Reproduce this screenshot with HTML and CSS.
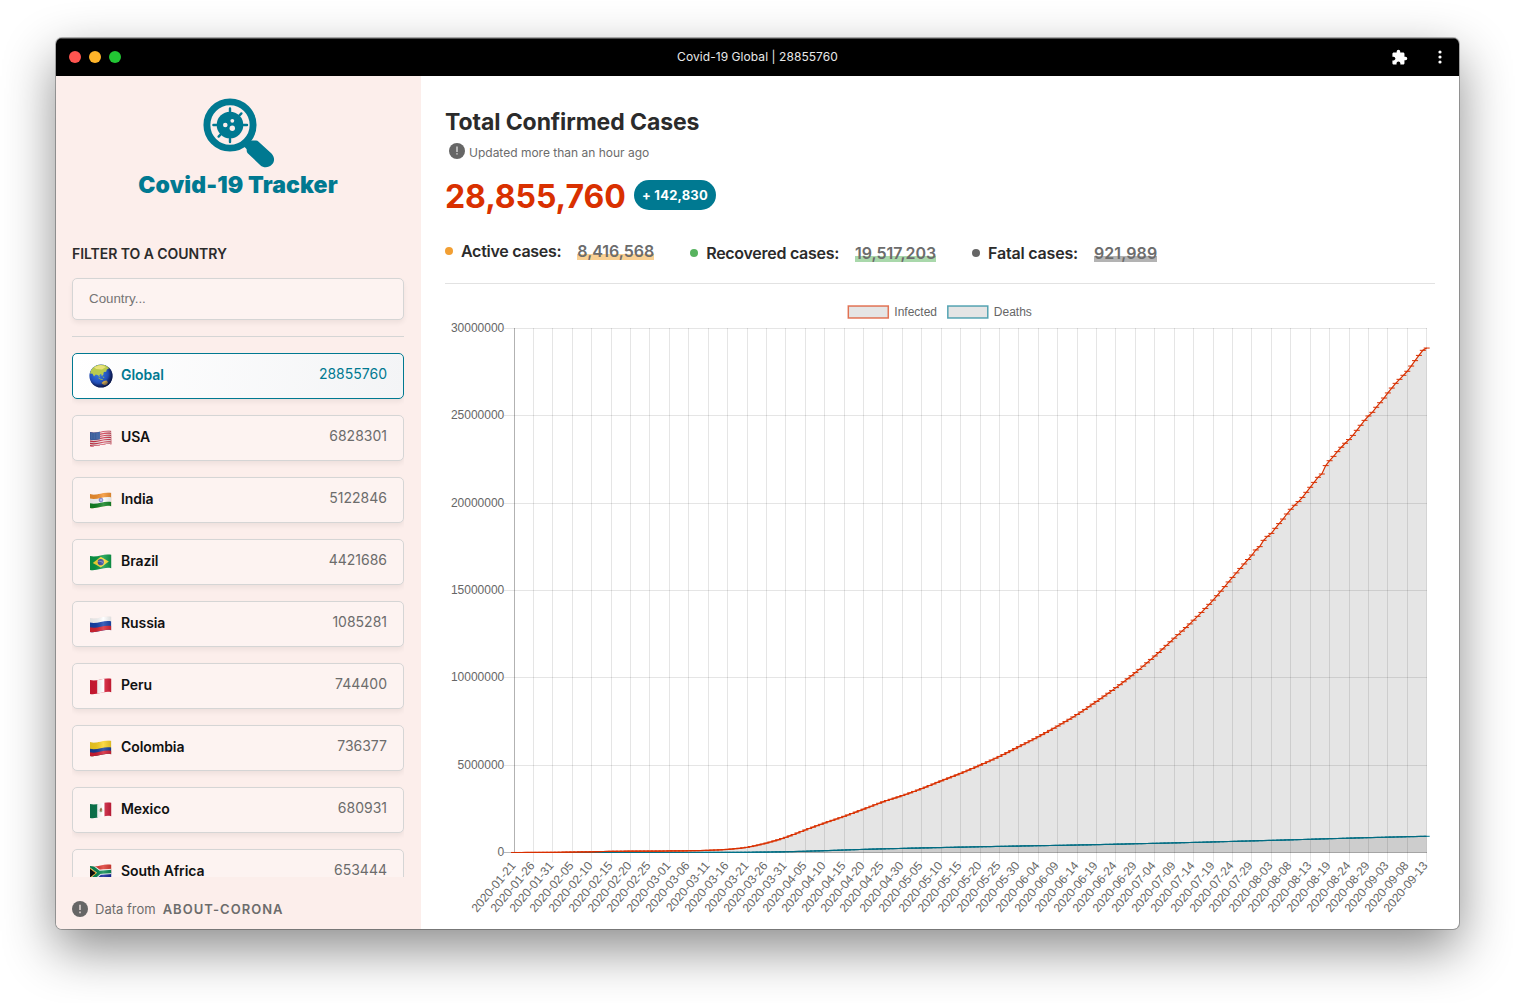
FILE: index.html
```html
<!DOCTYPE html>
<html lang="en">
<head>
<meta charset="utf-8">
<title>Covid-19 Global | 28855760</title>
<link rel="stylesheet" href="styles.css">
</head>
<body>
<svg class="defs" width="0" height="0" aria-hidden="true">
  <defs>
    <clipPath id="wave"><path d="M0 2C7 4 14-1 21.2 .8V14.2C14 12.4 7 17.4 0 16Z"/></clipPath>
    <path id="band" d="M0 2C7 4 14-1 21.5 .8V20H0Z"/>
    <linearGradient id="gloss" x1="0" x2="1" y1="0" y2="0">
      <stop offset="0" stop-color="#000" stop-opacity=".12"/><stop offset=".25" stop-color="#000" stop-opacity=".1"/>
      <stop offset=".6" stop-color="#fff" stop-opacity=".16"/><stop offset="1" stop-color="#000" stop-opacity=".14"/>
    </linearGradient>
    <radialGradient id="ocean" cx=".4" cy=".4" r=".62">
      <stop offset="0" stop-color="#3c7fe6"/><stop offset=".6" stop-color="#2352bd"/><stop offset="1" stop-color="#101f5c"/>
    </radialGradient>
    <radialGradient id="shade" cx=".4" cy=".4" r=".62">
      <stop offset=".7" stop-color="#0a1440" stop-opacity="0"/><stop offset="1" stop-color="#0a1440" stop-opacity=".7"/>
    </radialGradient>
    <clipPath id="disc"><circle cx="12" cy="12" r="11.6"/></clipPath>
  </defs>
</svg>

<div class="window">
  <header class="titlebar">
    <div class="lights"><i class="light red"></i><i class="light amber"></i><i class="light green"></i></div>
    <div class="window-title">Covid-19 Global | 28855760</div>
    <div class="tools">
      <svg width="17" height="17" viewBox="0 0 24 24" fill="#fff"><path d="M20.5 11H19V7c0-1.1-.9-2-2-2h-4V3.500a2.500 2.500 0 0 0-5 0V5H4c-1.100 0-1.990.9-1.990 2v3.800H3.500c1.490 0 2.700 1.210 2.700 2.700s-1.210 2.700-2.700 2.700H2V20c0 1.100.9 2 2 2h3.800v-1.500c0-1.490 1.210-2.700 2.700-2.700s2.700 1.210 2.700 2.700V22H17c1.100 0 2-.9 2-2v-4h1.500a2.500 2.500 0 0 0 0-5z"/></svg>
      <svg width="4" height="14" viewBox="0 0 4 14" fill="#fff"><circle cx="2" cy="2" r="1.600"/><circle cx="2" cy="7" r="1.600"/><circle cx="2" cy="12" r="1.600"/></svg>
    </div>
  </header>

  <div class="content">
    <aside class="sidebar">
      <div class="brand">
        <svg width="72" height="70" viewBox="0 0 72 70" fill="none" stroke="#007991">
          <circle cx="27" cy="27" r="23.100" stroke-width="6.900"/>
          <path d="M42 43l7 7" stroke-width="9"/>
          <path d="M48.500 42.600h4.500c1 0 1.900.4 2.600 1.100L68.500 55.500c3.200 3.400 3.500 8 .4 11-3.100 3.400-8.200 3.700-11.600.7L44.700 55.200c-.7-.7-1-1.500-1-2.500v-5z" fill="#007991" stroke="none"/>
          <circle cx="27" cy="27" r="13.300" fill="#007991" stroke="none"/>
          <path d="M27 10.400v6M27 38v6M10.400 27h6M38 27h6M35 19l3.400-3.600M19 35l-3.400 3.600" stroke-width="2.400" stroke-linecap="round"/>
          <g fill="#fceeeb" stroke="none"><circle cx="22.300" cy="27" r="2.300"/><circle cx="29.300" cy="22.800" r="1.900"/><circle cx="29.300" cy="30.200" r="2.700"/></g>
        </svg>
        <div class="brand-name">Covid-19 Tracker</div>
      </div>

      <h2 class="filter-title">FILTER TO A COUNTRY</h2>
      <input class="search" type="text" placeholder="Country...">
      <hr class="rule">

      <ul class="countries">
        <li class="country selected">
          <svg class="globe" width="24" height="24" viewBox="0 0 24 24">
            <circle cx="12" cy="12" r="11.600" fill="url(#ocean)"/>
            <g clip-path="url(#disc)">
              <path d="M1 9.500C2 4 6 .5 12 .4c4 0 7 1.600 8.500 3.800l-2.700 1.300-.6 2.300-2.400.2-.6 3-1.500 1-.6-2.300-1.800 1.500.6 2.500-1.800-2.500-2.300-.6L5 12.500 3.500 9.800z" fill="#b9cb4e"/>
              <path d="M5 3l7-2 5 2-4 2.500-6-.5z" fill="#e9e27a"/>
              <path d="M9.500 14l2.500 1.400 1.800.2M14 12.500l1 1.500" stroke="#8fae52" stroke-width="1" fill="none"/>
              <path d="M12.500 19l2.300-2 2.700-.6 1.500 1.800-1 2.300-2.300.7-2-1z" fill="#c9a24a"/>
              <circle cx="12" cy="12" r="11.600" fill="url(#shade)"/>
            </g>
          </svg>
          <span class="name">Global</span><span class="count">28855760</span>
        </li>
        <li class="country">
          <svg class="flag" width="22" height="17" viewBox="0 0 22 17"><g clip-path="url(#wave)">
            <use href="#band" fill="#d0354a"/><use href="#band" y="1.080" fill="#f3e4e6"/><use href="#band" y="2.150" fill="#d0354a"/><use href="#band" y="3.230" fill="#f3e4e6"/><use href="#band" y="4.300" fill="#d0354a"/><use href="#band" y="5.380" fill="#f3e4e6"/><use href="#band" y="6.460" fill="#d0354a"/><use href="#band" y="7.540" fill="#f3e4e6"/><use href="#band" y="8.600" fill="#d0354a"/><use href="#band" y="9.700" fill="#f3e4e6"/><use href="#band" y="10.800" fill="#d0354a"/><use href="#band" y="11.900" fill="#f3e4e6"/><use href="#band" y="13" fill="#d0354a"/>
            <path d="M0 0h10v9.200c-3 .8-6 1.200-10 .5z" fill="#3f66ad"/>
            <path d="M1 4h8M1 6h8M1 8h8" stroke="#8fa8d6" stroke-width=".5" stroke-dasharray=".8 .8"/>
            <path d="M0 0h22v17H0z" fill="url(#gloss)"/></g></svg>
          <span class="name">USA</span><span class="count">6828301</span>
        </li>
        <li class="country">
          <svg class="flag" width="22" height="17" viewBox="0 0 22 17"><g clip-path="url(#wave)">
            <use href="#band" fill="#f59331"/><use href="#band" y="4.600" fill="#fff"/><use href="#band" y="9.300" fill="#128525"/>
            <circle cx="11" cy="8" r="1.900" fill="#b9bff0" stroke="#4c55b5" stroke-width=".7"/>
            <path d="M0 0h22v17H0z" fill="url(#gloss)"/></g></svg>
          <span class="name">India</span><span class="count">5122846</span>
        </li>
        <li class="country">
          <svg class="flag" width="22" height="17" viewBox="0 0 22 17"><g clip-path="url(#wave)">
            <path d="M0 0h22v17H0z" fill="#0b9b48"/><path d="M2.800 9l8-6.200 8 4.800-8 6z" fill="#fbdc35"/><circle cx="10.800" cy="8.200" r="3.100" fill="#3a4a9c"/><path d="M8.200 7.400c2-.4 4 .2 5.300 1.800" stroke="#aeb9e0" stroke-width=".6" fill="none"/>
            <path d="M0 0h22v17H0z" fill="url(#gloss)"/></g></svg>
          <span class="name">Brazil</span><span class="count">4421686</span>
        </li>
        <li class="country">
          <svg class="flag" width="22" height="17" viewBox="0 0 22 17"><g clip-path="url(#wave)">
            <use href="#band" fill="#fff"/><use href="#band" y="4.600" fill="#1744ae"/><use href="#band" y="9.300" fill="#dc2633"/>
            <path d="M0 0h22v17H0z" fill="url(#gloss)"/></g></svg>
          <span class="name">Russia</span><span class="count">1085281</span>
        </li>
        <li class="country">
          <svg class="flag" width="22" height="17" viewBox="0 0 22 17"><g clip-path="url(#wave)">
            <path d="M0 0h22v17H0z" fill="#d91a35"/><path d="M7.200 0h7.200v17H7.200z" fill="#fff"/>
            <path d="M0 0h22v17H0z" fill="url(#gloss)"/></g></svg>
          <span class="name">Peru</span><span class="count">744400</span>
        </li>
        <li class="country">
          <svg class="flag" width="22" height="17" viewBox="0 0 22 17"><g clip-path="url(#wave)">
            <use href="#band" fill="#fcd425"/><use href="#band" y="6.800" fill="#17409c"/><use href="#band" y="10.200" fill="#d51f35"/>
            <path d="M0 0h22v17H0z" fill="url(#gloss)"/></g></svg>
          <span class="name">Colombia</span><span class="count">736377</span>
        </li>
        <li class="country">
          <svg class="flag" width="22" height="17" viewBox="0 0 22 17"><g clip-path="url(#wave)">
            <path d="M0 0h8v17H0z" fill="#0b7a50"/><path d="M7.200 0h7.500v17H7.200z" fill="#fff"/><path d="M14.500 0H22v17h-7.500z" fill="#cf1c3a"/>
            <path d="M9.700 7.200l1.400-1.700 1.200 1.800-.8 2.200-1.500-.3z" fill="#96683c"/><path d="M9.200 8.600c.5 1.500 2.800 1.600 3.500 0" stroke="#6d9b5a" stroke-width=".7" fill="none"/>
            <path d="M0 0h22v17H0z" fill="url(#gloss)"/></g></svg>
          <span class="name">Mexico</span><span class="count">680931</span>
        </li>
        <li class="country">
          <svg class="flag" width="22" height="17" viewBox="0 0 22 17"><g clip-path="url(#wave)">
            <path d="M0 0h22v8H0z" fill="#dd3a32"/><path d="M0 8h22v9H0z" fill="#10249a"/>
            <path d="M0 1.500l9 6.800c4 0 8-1 13-1M0 17l9-8" stroke="#fff" stroke-width="5.200" fill="none"/>
            <path d="M0 1.500l9 6.800c4 .2 8-.8 13-1M0 17l9-8" stroke="#0a8a55" stroke-width="3.200" fill="none"/>
            <path d="M-1 3.600l7.200 5.400L-1 14.600z" fill="#111" stroke="#f2b52c" stroke-width="1"/>
            <path d="M0 0h22v17H0z" fill="url(#gloss)"/></g></svg>
          <span class="name">South Africa</span><span class="count">653444</span>
        </li>
      </ul>

      <footer class="source">
        <svg width="16" height="16" viewBox="0 0 16 16"><circle cx="8" cy="8" r="8" fill="#666"/><path d="M8 3.800v5.200M8 10.600v1.600" stroke="#fceeeb" stroke-opacity=".85" stroke-width="1.500"/></svg>
        <span>Data from</span><a class="source-link">ABOUT-CORONA</a>
      </footer>
    </aside>

    <main class="main">
      <h1 class="heading">Total Confirmed Cases</h1>
      <div class="updated">
        <svg width="16" height="16" viewBox="0 0 16 16"><circle cx="8" cy="8" r="8" fill="#666"/><path d="M8 3.400v5.600M8 10.200v1.300" stroke="#eee" stroke-width="1.200"/></svg>
        <span>Updated more than an hour ago</span>
      </div>
      <div class="total"><span class="total-number">28,855,760</span><span class="badge">+ 142,830</span></div>
      <div class="stats">
        <div class="stat active"><i class="dot"></i><span class="label">Active cases:</span><span class="value">8,416,568</span></div>
        <div class="stat recovered"><i class="dot"></i><span class="label">Recovered cases:</span><span class="value">19,517,203</span></div>
        <div class="stat fatal"><i class="dot"></i><span class="label">Fatal cases:</span><span class="value">921,989</span></div>
      </div>
      <svg class="chart" id="chart" width="990" height="620" viewBox="0 0 990 620"></svg>
    </main>
  </div>
</div>
<script src="chart.js"></script>
</body>
</html>
```
FILE: styles.css
```css
* { box-sizing: border-box; }

body {
  margin: 0;
  width: 1515px;
  height: 1003px;
  overflow: hidden;
  padding: 38px 56px 0;
  background: #fff;
  font-family: Inter, "Liberation Sans", sans-serif;
  color: #2b2b2b;
}

.defs { display: block; }

.window {
  width: 1403px;
  height: 891px;
  display: flex;
  flex-direction: column;
  border-radius: 6px;
  overflow: hidden;
  background: #fff;
  box-shadow: 0 0 0 1px rgba(0, 0, 0, .28), 0 20px 52px rgba(0, 0, 0, .46);
}

.titlebar {
  flex: none;
  height: 38px;
  padding: 0 17px 0 13px;
  display: grid;
  grid-template-columns: 1fr auto 1fr;
  align-items: center;
  background: #000;
  border-top: 1px solid #4a4a4a;
}
.lights { display: flex; gap: 8px; margin-top: -1px; }
.light { width: 12px; height: 12px; border-radius: 50%; }
.red { background: #ff5550; }
.amber { background: #ffb429; }
.green { background: #22c634; }
.window-title { color: #e8e8e8; font-size: 12px; letter-spacing: .06px; margin: -3px 0 0 4px; }
.tools { display: flex; align-items: center; justify-content: flex-end; gap: 30px; margin-top: -1px; }

.content { flex: 1; min-height: 0; display: flex; }

.sidebar {
  width: 365px;
  padding: 22px 17px 0 16px;
  display: flex;
  flex-direction: column;
  background: #fceeeb;
}
.brand { display: flex; flex-direction: column; align-items: center; }
.brand svg { margin-left: 2px; }
.brand-name {
  margin-top: 3px;
  height: 28px;
  line-height: 28px;
  font-size: 23px;
  font-weight: 900;
  letter-spacing: .12px;
  color: #007991;
  white-space: nowrap;
}
.filter-title {
  margin: 45px 0 0;
  height: 20px;
  line-height: 20px;
  font-size: 14px;
  font-weight: 600;
  letter-spacing: -.05px;
}
.search {
  margin-top: 14px;
  height: 42px;
  width: 332px;
  padding: 0 16px 2px;
  border: 1px solid #d5d5d5;
  border-radius: 5px;
  background: #fdf3f1;
  font: 13.333px "Liberation Sans", Arial, sans-serif;
  box-shadow: 0 3px 5px rgba(0, 0, 0, .06);
}
.search::placeholder { color: #757575; }
.rule { width: 332px; margin: 16px 0; border: 0; border-top: 1px solid #d5d5d5; }

.countries {
  list-style: none;
  margin: 0;
  padding: 0;
  width: 332px;
  height: 524px;
  flex: none;
  overflow: hidden;
  display: flex;
  flex-direction: column;
  gap: 16px;
}
.country {
  flex: none;
  height: 46px;
  padding: 0 16px 0 17px;
  display: flex;
  align-items: center;
  border: 1px solid #d5d5d5;
  border-radius: 5px;
  background: #fdf3f1;
  box-shadow: 0 3px 5px rgba(0, 0, 0, .06);
  font-size: 14px;
}
.flag { margin-right: 9px; margin-top: 1px; }
.globe { margin: 0 8px 0 -1px; }
.name { font-weight: 600; letter-spacing: -.09px; color: #111; margin-top: -4px; }
.count { margin-left: auto; margin-top: -5px; color: #6c6c6c; }
.selected {
  border-color: #007991;
  background: linear-gradient(100deg, #fff, #f3f4f6);
}
.selected .name, .selected .count { color: #007991; }

.source {
  margin-top: 24px;
  height: 16px;
  display: flex;
  align-items: center;
  font-size: 13px;
  line-height: 16px;
  color: #6c6c6c;
}
.source svg { margin-right: 7px; }
.source span, .source-link { margin-top: -1px; }
.source-link { margin-left: 7px; font-weight: 600; letter-spacing: 1px; }

.main { flex: 1; padding: 30px 24px 0; }
.heading { margin: 0; height: 32px; line-height: 32px; font-size: 23px; font-weight: 700; letter-spacing: -.09px; white-space: nowrap; }
.updated {
  margin: 4px 0 0 4px;
  height: 18px;
  display: flex;
  align-items: center;
  gap: 4px;
  color: #6c6c6c;
  font-size: 12px;
}
.updated span { margin-top: 2px; }
.updated svg { margin-top: -1px; }
.total { margin-top: 20px; height: 30px; display: flex; align-items: center; gap: 9px; }
.total-number { width: 180px; font-size: 32px; font-weight: 700; color: #d93000; line-height: 30px; letter-spacing: -.08px; padding-top: 3px; }
.badge {
  height: 30px;
  width: 82px;
  line-height: 31px;
  text-align: center;
  border-radius: 15px;
  background: #007991;
  color: #fff;
  font-size: 13px;
  font-weight: 700;
  letter-spacing: .2px;
}
.stats {
  height: 74px;
  padding-top: 32px;
  display: flex;
  align-items: flex-start;
  gap: 36px;
  border-bottom: 1px solid #e2e2e2;
  font-size: 16px;
  font-weight: 600;
  line-height: 18px;
  letter-spacing: -.28px;
}
.stat { display: flex; align-items: center; margin-top: 2px; }
.stat.active { margin-top: 0; }
.dot { width: 8px; height: 8px; border-radius: 50%; margin-right: 8px; }
.label { margin-right: 16px; }
.value { color: #6c6c6c; font-weight: 600; letter-spacing: -.03px; }
.fatal { letter-spacing: -.2px; }
.fatal .value { letter-spacing: .1px; }
.active .dot { background: #f29f33; }
.recovered .dot { background: #57b35f; }
.fatal .dot { background: #666; }
.active .value { background: linear-gradient(transparent 65%, #f9d093 65%); }
.recovered .value { background: linear-gradient(transparent 65%, #a9d8ab 65%); }
.fatal .value { background: linear-gradient(transparent 65%, #b3b3b3 65%); }

.chart { display: block; margin-top: 16px; font: 12px "Liberation Sans", Arial, sans-serif; fill: #666; }
```
FILE: chart.js
```js
const NS = 'http://www.w3.org/2000/svg';
const chart = document.getElementById('chart');

const labels = ('01-21 01-26 01-31 02-05 02-10 02-15 02-20 02-25 03-01 03-06 03-11 03-16 03-21 03-26 03-31 ' +
  '04-05 04-10 04-15 04-20 04-25 04-30 05-05 05-10 05-15 05-20 05-25 05-30 06-04 06-09 06-14 06-19 06-24 ' +
  '06-29 07-04 07-09 07-14 07-19 07-24 07-29 08-03 08-08 08-13 08-19 08-24 08-29 09-03 09-08 09-13').split(' ');

// Millions of cases: one value per five days up to 29 July, then one per day.
const fiveDay = [0.001, 0.003, 0.01, 0.025, 0.04, 0.067, 0.075, 0.08, 0.088, 0.1, 0.126, 0.18, 0.3, 0.54, 0.87,
  1.29, 1.69, 2.07, 2.48, 2.9, 3.26, 3.66, 4.1, 4.53, 5.0, 5.5, 6.06, 6.63, 7.24, 7.9, 8.65, 9.44, 10.3,
  11.25, 12.27, 13.3, 14.45, 15.75, 17.03];
const daily = [17.32, 17.51, 17.87, 18.1, 18.27, 18.56, 18.83, 19.09, 19.38, 19.65, 19.88, 20.09, 20.33, 20.62,
  20.91, 21.19, 21.48, 21.67, 22.15, 22.43, 22.68, 22.95, 23.2, 23.43, 23.64, 23.88, 24.17, 24.46, 24.74,
  24.99, 25.2, 25.49, 25.75, 26.02, 26.31, 26.59, 26.86, 27.09, 27.32, 27.55, 27.85, 28.16, 28.46, 28.75, 28.88];
const deathsTen = [0, 0, 0, 0.002, 0.003, 0.005, 0.012, 0.043, 0.105, 0.178, 0.235, 0.284, 0.328, 0.37, 0.408,
  0.45, 0.5, 0.55, 0.605, 0.665, 0.725, 0.79, 0.85, 0.905];

function expand(values, step) {
  const out = [];
  for (let i = 0; i < values.length - 1; i++) {
    for (let k = 0; k < step; k++) {
      const t = k / step, a = values[i], b = values[i + 1];
      const p = i ? values[i - 1] : a, n = i + 2 < values.length ? values[i + 2] : 2 * b - a;
      const m0 = (b - p) / 2, m1 = (n - a) / 2;
      out.push((2 * t ** 3 - 3 * t * t + 1) * a + (t ** 3 - 2 * t * t + t) * m0 +
        (3 * t * t - 2 * t ** 3) * b + (t ** 3 - t * t) * m1);
    }
  }
  out.push(values[values.length - 1]);
  return out;
}

const infected = expand(fiveDay, 5).concat(daily);
const deaths = expand(deathsTen, 10);
while (deaths.length < infected.length) deaths.push(deaths[deaths.length - 1] + 0.0045);

const left = 69, right = 981.7, base = 552.5, unit = 524 / 30;
const px = i => left + (right - left) * i / (infected.length - 1);
const py = v => base - v * unit;

function add(tag, attrs, text) {
  const el = document.createElementNS(NS, tag);
  for (const key in attrs) el.setAttribute(key, attrs[key]);
  if (text !== undefined) el.textContent = text;
  chart.appendChild(el);
}

for (let v = 0; v <= 30; v += 5) {
  const y = Math.floor(py(v)) + 0.5;
  add('path', { d: `M59 ${y}H982`, stroke: v ? 'rgba(0,0,0,.1)' : 'rgba(0,0,0,.28)' });
  add('text', { x: 59.3, y: y + 3.5, 'text-anchor': 'end' }, v * 1000000);
}
labels.forEach((day, i) => {
  const x = Math.floor(px(i * 5)) + 0.5;
  add('path', { d: `M${x} 28V${i ? 562 : 553}`, stroke: i ? 'rgba(0,0,0,.1)' : 'rgba(0,0,0,.3)' });
  add('text', { transform: `translate(${x - 1.2} 563.4) rotate(-50)`, y: 4, 'text-anchor': 'end' }, '2020-' + day);
});

function series(values, color) {
  const line = values.map((v, i) => `${px(i).toFixed(2)} ${py(v).toFixed(2)}`).join('L');
  add('path', { d: `M${line}V${base}H${left}Z`, fill: 'rgba(0,0,0,.1)' });
  add('path', { d: 'M' + line, fill: 'none', stroke: color, 'stroke-width': 1.2 });
  add('path', {
    d: values.map((v, i) => `M${(px(i) - 3).toFixed(2)} ${py(v).toFixed(2)}h6`).join(''),
    stroke: color
  });
}
series(deaths, '#007991');
series(infected, '#d93000');

function legend(x, color, name) {
  add('rect', { x: x, y: 6, width: 40, height: 12, fill: '#e5e5e5', stroke: color, 'stroke-width': 1.5, 'stroke-opacity': 0.65 });
  add('text', { x: x + 46, y: 16 }, name);
}
legend(403.3, '#d93000', 'Infected');
legend(502.8, '#007991', 'Deaths');
```
